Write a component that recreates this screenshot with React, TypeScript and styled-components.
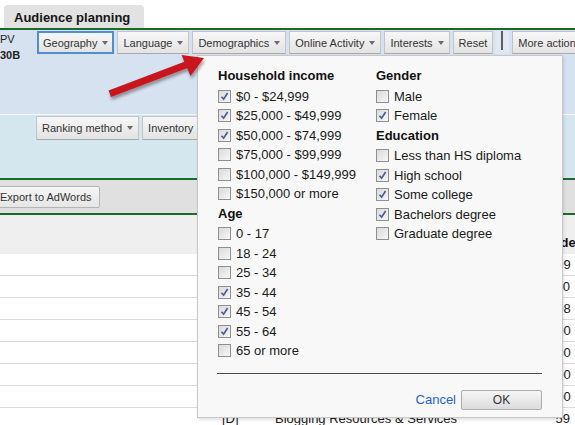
import styled, { createGlobalStyle } from 'styled-components'

const GlobalStyle = createGlobalStyle`
  body {
    margin: 0;
    background: #fff;
    font-family: "Liberation Sans", Arial, sans-serif;
    font-size: 13px;
    color: #222;
  }
`;

const Page = styled.div`
  position: relative;
  width: 575px;
  height: 425px;
  overflow: hidden;
`;

const TabBar = styled.div`
  display: flex;
  align-items: flex-end;
  height: 28px;
  padding-left: 4px;
`;

const Tab = styled.div`
  width: 140px;
  height: 23px;
  box-sizing: border-box;
  padding-left: 10px;
  background: #e2e2e2;
  border-radius: 4px 4px 0 0;
  font-size: 13px;
  font-weight: 700;
  line-height: 25px;
  color: #151515;
`;

const GreenRule = styled.div`
  height: 2px;
  background: #1b6a2c;
`;

const TopPanel = styled.div`
  display: flex;
  height: 85px;
  padding-top: 1px;
  box-sizing: border-box;
  background: #d6e2f0;
  border-bottom: 1px solid #f2f7fa;
`;

const SideLabels = styled.div`
  width: 37px;
  flex-shrink: 0;
  font-size: 11px;
  line-height: 16px;
  color: #222;
`;

const SideLabel = styled.div<{ $bold?: boolean }>`
  font-weight: ${(p) => (p.$bold ? 700 : 400)};
`;

const Toolbar = styled.div`
  display: flex;
  align-items: flex-start;
  gap: 3px;
  flex-shrink: 0;
`;

const ToolButton = styled.div<{ $focused?: boolean; $tall?: boolean }>`
  display: flex;
  align-items: center;
  gap: 5px;
  height: ${(p) => (p.$tall ? 24 : 23)}px;
  box-sizing: border-box;
  padding: 0 ${(p) => (p.$focused ? 4 : 5)}px;
  background: linear-gradient(#f7f7f7, #e3e3e3);
  border: ${(p) => (p.$focused ? '2px solid #4d8fd0' : '1px solid #c4c4c4')};
  border-bottom-color: ${(p) => (p.$focused ? '#4d8fd0' : '#a9a9a9')};
  font-size: 11px;
  color: #333;
  white-space: nowrap;
  flex-shrink: 0;
`;

const Caret = styled.span`
  width: 0;
  height: 0;
  border-left: 3.5px solid transparent;
  border-right: 3.5px solid transparent;
  border-top: 4px solid #6b6b6b;
`;

const Separator = styled.div`
  width: 14px;
  height: 23px;
  margin-left: -1px;
  display: flex;
  justify-content: center;
  background: #dfe8f3;

  &::after {
    content: "";
    width: 2px;
    height: 19px;
    background: #5e5e5e;
  }
`;

const RankPanel = styled.div`
  height: 63px;
  padding: 1px 0 0 36px;
  box-sizing: border-box;
  background: #d4e6ee;
`;

const ActionBar = styled.div`
  height: 33px;
  padding-top: 6px;
  box-sizing: border-box;
  background: #e0e0e0;
`;

const ExportButton = styled.div`
  display: inline-flex;
  align-items: center;
  height: 22px;
  margin-left: -9px;
  padding: 0 7px 0 8px;
  box-sizing: border-box;
  background: linear-gradient(#f6f6f6, #e6e6e6);
  border: 1px solid #b5b5b5;
  border-radius: 2px;
  font-size: 11px;
  color: #333;
`;

const TableHeader = styled.div`
  display: grid;
  grid-template-columns: 549px 26px;
  align-items: end;
  height: 39px;
  padding-bottom: 4px;
  box-sizing: border-box;
  background: #efefef;
  font-weight: 700;
  color: #111;
`;

const Row = styled.div`
  display: grid;
  grid-template-columns: 222px 53px 274px 26px;
  align-items: center;
  height: 22px;
  box-sizing: border-box;
  border-bottom: 1px solid #dcdcdc;
  color: #222;
  white-space: nowrap;
`;

const IndexCell = styled.div`
  text-align: right;
  padding-right: 5px;
`;

const Popup = styled.div`
  position: absolute;
  left: 197px;
  top: 55px;
  width: 366px;
  height: 363px;
  box-sizing: border-box;
  padding: 10px 20px 0;
  background: #f8f8f8;
  border: 1px solid #c8c8c8;
  box-shadow: 1px 2px 3px rgba(0, 0, 0, 0.12);
`;

const Columns = styled.div`
  display: grid;
  grid-template-columns: 158px 1fr;
`;

const GroupTitle = styled.div`
  height: 19.5px;
  line-height: 19.5px;
  font-weight: 700;
  color: #111;

  &:first-child {
    margin-bottom: 1px;
  }
`;

const Option = styled.label`
  display: flex;
  align-items: center;
  gap: 5px;
  height: 19.5px;
  color: #1a1a1a;
  white-space: nowrap;
`;

const Box = styled.span`
  display: flex;
  align-items: center;
  justify-content: center;
  width: 13px;
  height: 13px;
  box-sizing: border-box;
  border: 1px solid #8f8f8f;
  background: linear-gradient(135deg, #dadada, #f7f7f7);
`;

const Divider = styled.div`
  height: 1px;
  margin: 12px 0 0 -1px;
  background: #4a4a4a;
`;

const Footer = styled.div`
  display: flex;
  justify-content: flex-end;
  align-items: center;
  gap: 5px;
  margin-top: 16px;
`;

const CancelLink = styled.a`
  color: #1f63cf;
  text-decoration: none;
`;

const OkButton = styled.div`
  width: 81px;
  height: 20px;
  box-sizing: border-box;
  background: linear-gradient(#f6f6f6, #dcdcdc);
  border: 1px solid #acacac;
  border-radius: 2px;
  font-size: 12px;
  line-height: 18px;
  text-align: center;
  color: #333;
`;

const Overlay = styled.svg`
  position: absolute;
  left: 0;
  top: 0;
  pointer-events: none;
`;

function Checkbox({ checked }: { checked?: boolean }) {
  return (
    <Box>
      {checked && (
        <svg width="9" height="9" viewBox="0 0 9 9">
          <path d="M1.5 4.8 L3.6 7.2 L7.6 1" fill="none" stroke="#4a5c9f" strokeWidth="1.7" />
        </svg>
      )}
    </Box>
  );
}

type Group = { title: string; items: [string, boolean][] };

const leftGroups: Group[] = [
  {
    title: 'Household income',
    items: [
      ['$0 - $24,999', true],
      ['$25,000 - $49,999', true],
      ['$50,000 - $74,999', true],
      ['$75,000 - $99,999', false],
      ['$100,000 - $149,999', false],
      ['$150,000 or more', false],
    ],
  },
  {
    title: 'Age',
    items: [
      ['0 - 17', false],
      ['18 - 24', false],
      ['25 - 34', false],
      ['35 - 44', true],
      ['45 - 54', true],
      ['55 - 64', true],
      ['65 or more', false],
    ],
  },
];

const rightGroups: Group[] = [
  {
    title: 'Gender',
    items: [
      ['Male', false],
      ['Female', true],
    ],
  },
  {
    title: 'Education',
    items: [
      ['Less than HS diploma', false],
      ['High school', true],
      ['Some college', true],
      ['Bachelors degree', true],
      ['Graduate degree', false],
    ],
  },
];

// rows above the last one sit under the open menu, only the index column shows
const rows = [
  ['', '', '109'],
  ['', '', '110'],
  ['', '', '108'],
  ['', '', '100'],
  ['', '', '100'],
  ['', '', '100'],
  ['', '', '100'],
  ['[D]', 'Blogging Resources & Services', '59'],
];

const toolButtons = ['Language', 'Demographics', 'Online Activity', 'Interests'];

function GroupList({ groups }: { groups: Group[] }) {
  return (
    <div>
      {groups.map((g) => (
        <div key={g.title}>
          <GroupTitle>{g.title}</GroupTitle>
          {g.items.map(([label, checked]) => (
            <Option key={label}>
              <Checkbox checked={checked} />
              {label}
            </Option>
          ))}
        </div>
      ))}
    </div>
  );
}

export default function App() {
  return (
    <Page>
      <GlobalStyle />
      <TabBar>
        <Tab>Audience planning</Tab>
      </TabBar>
      <GreenRule />
      <TopPanel>
        <SideLabels>
          <SideLabel>PV</SideLabel>
          <SideLabel $bold>30B</SideLabel>
        </SideLabels>
        <Toolbar>
          <ToolButton $focused>
            Geography <Caret />
          </ToolButton>
          {toolButtons.map((b) => (
            <ToolButton key={b}>
              {b} <Caret />
            </ToolButton>
          ))}
          <ToolButton>Reset</ToolButton>
          <Separator />
          <ToolButton>More actions</ToolButton>
        </Toolbar>
      </TopPanel>
      <RankPanel>
        <Toolbar>
          <ToolButton $tall>
            Ranking method <Caret />
          </ToolButton>
          <ToolButton $tall>
            Inventory <Caret />
          </ToolButton>
        </Toolbar>
      </RankPanel>
      <GreenRule />
      <ActionBar>
        <ExportButton>Export to AdWords</ExportButton>
      </ActionBar>
      <GreenRule />
      <TableHeader>
        <div />
        <div>Index</div>
      </TableHeader>
      {rows.map(([code, name, index], i) => (
        <Row key={i}>
          <div />
          <div>{code}</div>
          <div>{name}</div>
          <IndexCell>{index}</IndexCell>
        </Row>
      ))}

      <Popup>
        <Columns>
          <GroupList groups={leftGroups} />
          <GroupList groups={rightGroups} />
        </Columns>
        <Divider />
        <Footer>
          <CancelLink href="#">Cancel</CancelLink>
          <OkButton>OK</OkButton>
        </Footer>
      </Popup>

      <Overlay width="575" height="425" viewBox="0 0 575 425">
        <defs>
          <filter id="arrowShadow" x="-20%" y="-20%" width="140%" height="160%">
            <feDropShadow dx="1" dy="3" stdDeviation="1.5" floodColor="#000" floodOpacity="0.35" />
          </filter>
        </defs>
        <g filter="url(#arrowShadow)" fill="#c8161d">
          <path d="M108.5 90.5 L185 61.5 L187.5 68 L111 97 Z" />
          <path d="M204 58 L181.5 55 L190.5 76 Z" />
        </g>
      </Overlay>
    </Page>
  );
}
